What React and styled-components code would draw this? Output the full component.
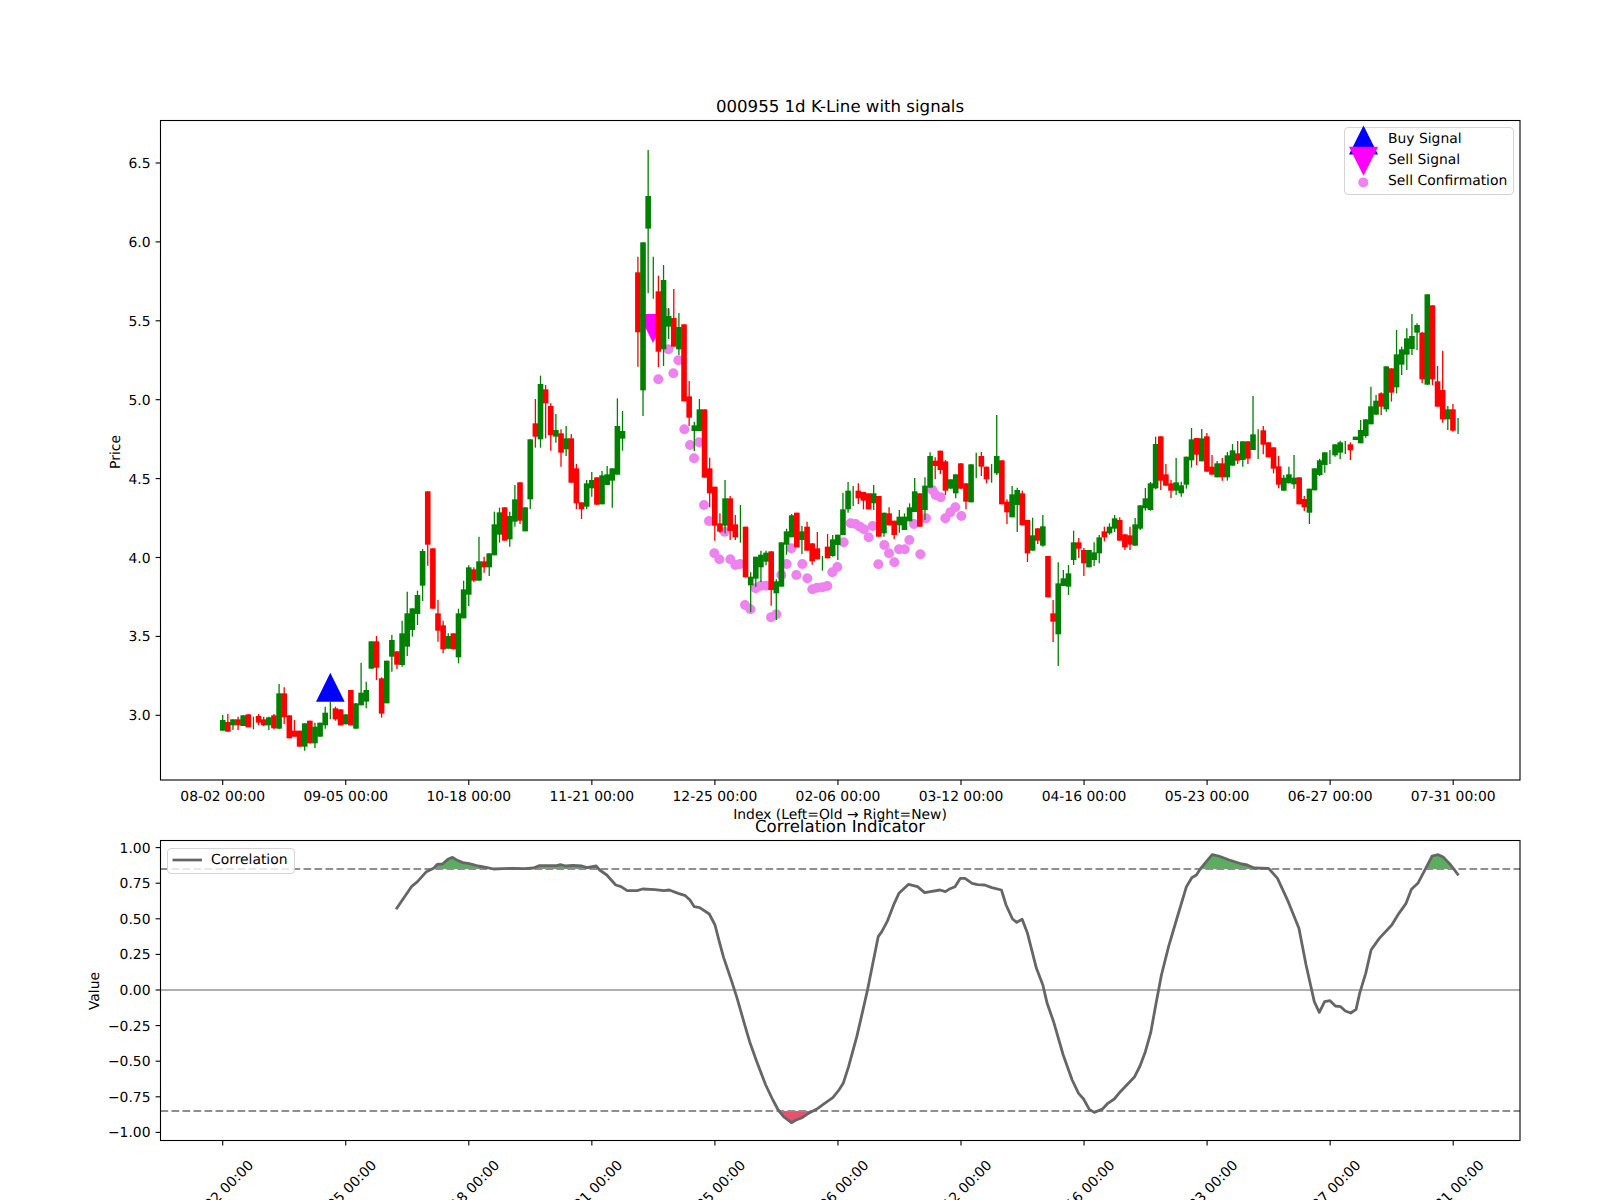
import React from "react";
import styled, { createGlobalStyle } from "styled-components";

const G = "#008000";
const R = "#ff0000";
const FONT = `"DejaVu Sans", "Liberation Sans", sans-serif`;

const X0 = 222.7;
const STEP = 5.126;
const xOf = (i) => X0 + STEP * i;

/* Each row: colour, wick top, body top, body bottom, wick bottom, as read in a 3x crop whose top is y0 */
const seg = (start, y0, rows) =>
  rows.map(([c, wt, bt, bb, wb], k) => ({
    i: start + k,
    c,
    wt: y0 + wt / 3,
    bt: y0 + bt / 3,
    bb: y0 + bb / 3,
    wb: y0 + wb / 3,
  }));

const CANDLES = [
  ...seg(0, 600, [
    [G, 345, 360, 392, 392], [R, 342, 366, 395, 395], [G, 358, 358, 376, 390], [R, 350, 358, 376, 390],
    [G, 345, 346, 378, 378], [R, 343, 343, 382, 382], [G, 350, 368, 368, 388], [R, 342, 348, 368, 375],
    [R, 350, 358, 376, 378], [G, 350, 352, 376, 390], [R, 342, 346, 385, 388], [G, 252, 280, 386, 388],
    [R, 262, 280, 352, 372], [R, 346, 346, 415, 415], [R, 360, 392, 410, 410], [R, 392, 392, 440, 440],
    [G, 370, 370, 440, 452], [R, 362, 362, 430, 430], [G, 368, 380, 430, 444], [G, 368, 368, 410, 410],
    [G, 320, 338, 376, 386], [G, 305, 305, 305, 358], [R, 320, 325, 358, 362], [R, 328, 328, 376, 376],
    [G, 343, 343, 373, 373], [R, 270, 270, 376, 376], [G, 310, 310, 386, 386], [G, 188, 278, 316, 316],
    [G, 245, 270, 305, 325], [G, 124, 124, 206, 206], [R, 108, 124, 203, 240], [R, 232, 235, 341, 353],
    [G, 182, 182, 310, 310], [G, 105, 120, 170, 215], [R, 154, 154, 194, 207],
  ]),
  ...seg(35, 370, [
    [G, 752, 790, 885, 890], [G, 665, 730, 830, 858], [G, 715, 715, 780, 800], [G, 662, 675, 732, 765],
    [G, 537, 543, 647, 693], [R, 364, 364, 524, 587], [R, 535, 535, 716, 716], [R, 690, 730, 782, 815],
    [R, 752, 766, 838, 850], [G, 790, 798, 836, 836], [R, 790, 790, 838, 838], [G, 716, 730, 862, 880],
    [G, 632, 658, 745, 745], [G, 586, 592, 674, 708], [R, 592, 598, 632, 636], [G, 500, 574, 632, 632],
    [R, 560, 574, 592, 608], [G, 550, 550, 592, 618], [G, 425, 463, 556, 556], [G, 413, 427, 494, 518],
    [R, 412, 412, 512, 512], [G, 425, 438, 508, 530], [G, 345, 388, 455, 470], [R, 337, 337, 452, 462],
    [G, 412, 412, 484, 484], [G, 208, 208, 388, 417], [R, 87, 160, 200, 233], [G, 17, 42, 208, 233],
    [R, 45, 58, 100, 205], [R, 100, 108, 195, 242], [G, 132, 180, 200, 218], [R, 178, 190, 248, 290],
    [G, 168, 205, 238, 258], [R, 192, 205, 338, 338], [R, 282, 295, 400, 417], [R, 397, 397, 418, 447],
    [G, 330, 340, 410, 417], [G, 306, 330, 355, 380], [R, 322, 322, 404, 404], [G, 303, 316, 403, 403],
    [G, 288, 313, 345, 345], [G, 295, 295, 332, 413], [G, 85, 168, 314, 314], [G, 123, 183, 206, 242],
  ]),
  ...seg(81, 130, [
    [R, 380, 427, 607, 710], [G, 337, 337, 781, 858], [G, 60, 198, 296, 490], [G, 380, 380, 380, 506],
    [R, 437, 484, 665, 711], [G, 405, 450, 658, 708], [G, 534, 558, 590, 627], [R, 477, 564, 650, 650],
    [G, 549, 591, 658, 675], [R, 583, 583, 814, 814],
  ]),
  ...seg(91, 320, [
    [R, 183, 229, 293, 318], [G, 305, 316, 333, 393], [G, 237, 268, 333, 333], [R, 268, 268, 473, 473],
  ]),
  ...seg(95, 420, [
    [R, 113, 145, 220, 262], [R, 200, 200, 317, 362], [R, 280, 310, 335, 338], [G, 180, 235, 317, 340],
    [R, 228, 235, 333, 360], [R, 285, 313, 352, 360], [G, 255, 255, 255, 368], [R, 320, 320, 472, 472],
    [G, 457, 470, 496, 576], [G, 410, 410, 476, 500], [G, 392, 404, 442, 486], [G, 392, 398, 425, 436],
    [R, 394, 394, 510, 557], [G, 478, 484, 520, 600], [G, 367, 367, 500, 500], [G, 326, 334, 374, 404],
    [G, 282, 286, 352, 352], [R, 278, 278, 382, 382], [G, 318, 334, 360, 402], [R, 305, 320, 392, 392],
    [R, 370, 370, 424, 434], [R, 336, 385, 418, 418], [G, 408, 408, 408, 452], [R, 342, 380, 415, 415],
    [G, 345, 358, 408, 410], [G, 344, 344, 375, 420], [G, 218, 268, 345, 345], [G, 186, 212, 268, 278],
    [G, 198, 198, 198, 258], [R, 190, 212, 235, 252], [R, 216, 216, 242, 268], [R, 220, 220, 268, 268],
    [G, 195, 220, 250, 270], [R, 228, 228, 350, 350], [G, 278, 278, 340, 350], [R, 262, 280, 316, 316],
    [R, 302, 302, 345, 357], [G, 270, 290, 316, 338], [G, 280, 290, 330, 330], [G, 250, 262, 304, 304],
    [G, 174, 214, 276, 276], [R, 220, 220, 320, 320], [G, 172, 197, 270, 300], [G, 97, 108, 203, 203],
    [R, 112, 122, 138, 178], [R, 92, 92, 150, 162], [R, 120, 124, 212, 225], [G, 178, 178, 206, 206],
    [G, 163, 163, 220, 235], [R, 130, 130, 206, 206], [R, 190, 190, 245, 268], [G, 133, 133, 247, 247],
    [G, 98, 98, 98, 175], [R, 96, 108, 140, 168], [R, 140, 140, 178, 190], [G, 132, 132, 132, 188],
    [G, -15, 108, 160, 165],
  ]),
  ...seg(152, 400, [
    [R, 181, 181, 313, 313], [R, 298, 305, 337, 372], [G, 258, 283, 352, 352], [G, 263, 270, 315, 396],
    [R, 272, 280, 376, 376], [R, 360, 360, 460, 486], [G, 353, 406, 452, 452], [R, 385, 385, 422, 432],
    [G, 345, 379, 437, 440], [R, 468, 468, 592, 592], [R, 600, 640, 665, 726], [G, 487, 550, 703, 798],
    [G, 510, 535, 558, 558], [G, 495, 520, 560, 585], [G, 392, 427, 480, 495], [R, 414, 427, 446, 474],
    [R, 444, 450, 490, 528], [G, 450, 450, 502, 502], [G, 427, 457, 480, 498], [G, 405, 412, 460, 490],
    [R, 380, 394, 412, 424], [G, 370, 380, 400, 404], [G, 345, 355, 386, 396], [R, 352, 360, 422, 422],
    [R, 403, 403, 442, 450], [R, 380, 406, 434, 450], [G, 354, 373, 437, 437], [G, 316, 316, 386, 390],
    [G, 264, 295, 325, 332], [G, 246, 250, 330, 332], [G, 110, 132, 265, 268], [R, 109, 109, 242, 270],
    [R, 192, 223, 257, 257], [R, 240, 250, 272, 294], [G, 174, 247, 272, 285], [G, 245, 256, 280, 290],
    [G, 170, 170, 254, 266], [G, 84, 118, 181, 203], [R, 114, 114, 164, 195], [G, 87, 115, 184, 184],
    [R, 99, 109, 215, 215], [R, 165, 200, 224, 224], [G, 183, 190, 232, 232], [R, 174, 190, 232, 242],
    [G, 156, 166, 232, 242], [G, 132, 151, 197, 197], [R, 123, 160, 182, 192], [G, 124, 124, 180, 200],
    [R, 124, 124, 176, 192], [G, -12, 103, 150, 150], [G, 88, 88, 88, 177], [R, 78, 91, 134, 163],
    [R, 127, 127, 172, 172], [R, 142, 142, 206, 220], [R, 168, 199, 254, 265], [G, 225, 233, 272, 272],
    [G, 200, 223, 250, 250], [G, 165, 233, 253, 266], [R, 232, 232, 313, 313], [R, 288, 297, 322, 333],
    [G, 266, 266, 338, 372], [G, 205, 205, 271, 271], [G, 176, 181, 225, 228], [G, 157, 157, 195, 218],
    [G, 150, 150, 150, 192], [G, 133, 133, 166, 170], [G, 122, 127, 158, 178], [G, 123, 123, 123, 162],
    [R, 127, 133, 151, 180],
  ]),
  ...seg(221, 280, [
    [G, 470, 470, 480, 480], [G, 420, 450, 490, 490], [G, 418, 418, 468, 473], [G, 320, 379, 433, 433],
    [G, 345, 362, 404, 404], [R, 337, 340, 380, 405], [G, 259, 259, 388, 395], [R, 265, 265, 338, 365],
    [G, 150, 223, 322, 340], [G, 200, 208, 254, 285], [G, 145, 175, 224, 270], [G, 102, 168, 207, 225],
    [G, 130, 135, 158, 210], [R, 155, 158, 298, 310], [G, 43, 43, 314, 314], [R, 76, 76, 298, 315],
    [R, 258, 304, 380, 380], [R, 212, 330, 418, 428], [G, 378, 388, 418, 450], [R, 372, 388, 452, 455],
    [G, 414, 414, 414, 462],
  ]),
];

const crop = (x0, y0, pts, xScale = 1) => pts.map(([x, y]) => [x0 + (x * xScale) / 3, y0 + y / 3]);

const DOTS = [
  ...crop(690, 420, [
    [0,75],[27,67],[12,115],[42,255],[57,303],[104,335],[73,400],[88,418],[121,418],[136,435],[150,432],[165,555],
    [181,568],[197,505],[212,497],[228,497],[243,592],[259,583],[274,465],[290,432],[304,385],[319,465],[337,432],
    [352,475],[367,508],[381,503],[397,502],[412,498],[427,457],[442,441],[461,367],[482,310],[497,312],[510,320],
    [522,328],[536,352],[548,318],[565,433],[583,375],[597,400],[613,427],[627,388],[644,388],[658,360],[672,312],
    [691,403],[708,295],[727,210],[737,225],[752,232],[766,295],[781,277],[796,262],[814,288],
  ]),
  ...crop(600, 130, [[175,748],[220,730],[235,691],[205,658],[195,548]]),
  ...crop(620, 320, [[193,328]]),
];

const LINE_SCALE = 1680 / 1568;
const LINE = [
  ...crop(380, 840, [
    [45,208],[88,140],[105,125],[130,95],[150,85],[160,73],[175,72],[190,58],[203,52],[218,62],[232,68],[250,71],
    [275,78],[300,83],[318,87],[345,86],[375,85],[405,86],[430,84],[445,77],[475,77],[495,77],[505,74],[520,78],
    [540,76],[565,78],[580,83],[605,78],[615,90],[635,105],[660,135],[675,140],[692,152],[720,152],[735,147],[770,149],
    [795,152],[810,150],[835,160],[855,167],[868,180],[880,200],[895,203],[922,222],[938,255],[950,305],[962,352],
    [985,425],[1000,475],[1020,550],[1035,605],[1055,665],[1080,735],[1100,780],[1115,810],[1130,830],[1152,848],
    [1165,840],[1180,834],[1200,820],[1222,808],[1245,790],[1268,773],[1285,750],[1297,730],[1312,680],[1335,590],
    [1348,530],[1365,450],[1380,370],[1395,290],[1405,275],[1420,245],[1440,190],[1453,160],[1480,133],[1505,140],
    [1525,158],
  ], LINE_SCALE),
  ...crop(940, 840, [
    [0,150],[15,155],[25,148],[42,140],[57,115],[70,115],[90,130],[105,134],[125,135],[145,143],[172,150],[185,195],
    [203,237],[215,247],[230,238],[245,280],[270,385],[288,435],[300,490],[318,545],[345,645],[370,720],[388,760],
    [402,777],[418,808],[432,817],[455,807],[470,790],[488,777],[505,755],[545,710],[560,678],[575,635],[590,578],
    [605,490],[620,405],[640,320],[662,240],[690,140],[705,113],[718,105],[730,85],[762,44],[780,48],[810,60],[845,72],
    [860,75],[880,84],[920,85],[945,115],[975,185],[1005,265],[1025,375],[1048,485],[1062,517],[1077,485],[1092,482],
    [1107,498],[1122,500],[1135,513],[1150,519],[1165,508],[1175,460],[1192,400],[1207,330],[1230,295],[1265,255],
    [1285,220],[1305,190],[1320,148],[1338,130],[1360,85],[1378,48],[1395,44],[1410,52],[1430,75],[1452,106],
  ], LINE_SCALE),
];

const linePoints = LINE.map((p) => p.join(",")).join(" ");
const UP_Y = 869;
const DOWN_Y = 1111;
const ZERO_Y = 990;
const upFill = `${LINE[0][0]},${UP_Y} ${linePoints} ${LINE[LINE.length - 1][0]},${UP_Y}`;
const downFill = `${LINE[0][0]},${DOWN_Y} ${linePoints} ${LINE[LINE.length - 1][0]},${DOWN_Y}`;

const X_LABELS = [
  "08-02 00:00", "09-05 00:00", "10-18 00:00", "11-21 00:00", "12-25 00:00", "02-06 00:00",
  "03-12 00:00", "04-16 00:00", "05-23 00:00", "06-27 00:00", "07-31 00:00",
];
const tickX = (k) => X0 + 123.05 * k;
const PRICES = ["3.0", "3.5", "4.0", "4.5", "5.0", "5.5", "6.0", "6.5"];
const priceY = (p) => 715.3 - (p - 3) * 157.8;
const VALUES = ["1.00", "0.75", "0.50", "0.25", "0.00", "\u22120.25", "\u22120.50", "\u22120.75", "\u22121.00"];
const valueY = (k) => 847.6 + 35.6 * k;

const Global = createGlobalStyle`
  html, body { margin: 0; padding: 0; background: #fff; }
`;

const Figure = styled.div`
  width: 1600px;
  height: 1200px;
  overflow: hidden;
  background: #fff;
  font-family: ${FONT};
  color: #000;
  padding-top: 95px;
  box-sizing: border-box;
  text-rendering: geometricPrecision;
`;

const Title = styled.div`
  font-size: 16.6px;
  line-height: ${(p) => p.$lineHeight || 22}px;
  height: 22px;
  text-align: center;
  padding: 0 80px 0 160px;
  margin-top: ${(p) => p.$overlap || 0}px;
  position: relative;
  white-space: nowrap;
`;

const Plot = styled.div`
  position: relative;
  width: 1600px;
  height: ${(p) => p.$height}px;
`;

const Canvas = styled.svg`
  display: block;
  width: 1600px;
  height: 100%;
  overflow: visible;
`;

const Label = styled.text`
  font-family: ${FONT};
  font-size: 13.89px;
  fill: #000;
`;

const Legend = styled.div`
  position: absolute;
  left: ${(p) => p.$left}px;
  top: ${(p) => p.$top}px;
  width: ${(p) => p.$width}px;
  box-sizing: border-box;
  background: rgba(255, 255, 255, 0.8);
  border: 1.2px solid #d4d4d4;
  border-radius: 4px;
  padding: 1px 5px 2.5px 4px;
  display: flex;
  flex-direction: column;
`;

const LegendRow = styled.div`
  display: flex;
  align-items: center;
  height: 20.7px;
  font-size: 13.89px;
  white-space: nowrap;
`;

const Swatch = styled.svg`
  width: 39px;
  height: 20px;
  flex: none;
  overflow: visible;
`;

const Axes = ({ top, bottom }) => (
  <rect x={160.5} y={top} width={1359.5} height={bottom - top} fill="none" stroke="#000" strokeWidth={1.1} />
);

const Candle = ({ d }) => {
  const x = xOf(d.i);
  return (
    <g>
      <line x1={x} x2={x} y1={d.wt} y2={d.wb} stroke={d.c} strokeWidth={1.3} />
      {d.bb > d.bt && <rect x={x - 2.8} y={d.bt} width={5.6} height={d.bb - d.bt} fill={d.c} />}
    </g>
  );
};

const XTicks = ({ y }) =>
  X_LABELS.map((_, k) => (
    <line key={k} x1={tickX(k)} x2={tickX(k)} y1={y} y2={y + 4.9} stroke="#000" strokeWidth={1.1} />
  ));

export default function App() {
  return (
    <Figure>
      <Global />
      <Title $lineHeight={24}>000955 1d K-Line with signals</Title>
      <Plot $height={707}>
        <Canvas viewBox="0 117 1600 707">
          <polygon points="316,701.7 344.7,701.7 330.3,672.7" fill="#0000ff" />
          <polygon points="638.7,314 667.3,314 653,343" fill="#ff00ff" />
          {DOTS.map(([x, y], k) => (
            <circle key={k} cx={x} cy={y} r={5} fill="#ee82ee" />
          ))}
          {CANDLES.map((d) => (
            <Candle key={d.i} d={d} />
          ))}
          <Axes top={120.5} bottom={780} />
          <XTicks y={780} />
          {X_LABELS.map((t, k) => (
            <Label key={t} x={tickX(k)} y={801} textAnchor="middle">
              {t}
            </Label>
          ))}
          {PRICES.map((t) => (
            <g key={t}>
              <line x1={155.6} x2={160.5} y1={priceY(+t)} y2={priceY(+t)} stroke="#000" strokeWidth={1.1} />
              <Label x={150.5} y={priceY(+t) + 5} textAnchor="end">
                {t}
              </Label>
            </g>
          ))}
          <Label x={840} y={819} textAnchor="middle">
            Index (Left=Old → Right=New)
          </Label>
          <Label transform="translate(120 452) rotate(-90)" textAnchor="middle">
            Price
          </Label>
        </Canvas>
        <Legend $left={1344} $top={10} $width={169.5}>
          <LegendRow>
            <Swatch viewBox="0 0 39 20">
              <polygon points="0,25.5 29,25.5 14.5,-3.5" fill="#0000ff" />
            </Swatch>
            Buy Signal
          </LegendRow>
          <LegendRow>
            <Swatch viewBox="0 0 39 20">
              <polygon points="0,-3.2 29,-3.2 14.5,25.8" fill="#ff00ff" />
            </Swatch>
            Sell Signal
          </LegendRow>
          <LegendRow>
            <Swatch viewBox="0 0 39 20">
              <circle cx={14.3} cy={11.4} r={5} fill="#ee82ee" />
            </Swatch>
            Sell Confirmation
          </LegendRow>
        </Legend>
      </Plot>
      <Title $overlap={-8}>Correlation Indicator</Title>
      <Plot $height={362}>
        <Canvas viewBox="0 838 1600 362">
          <clipPath id="above">
            <rect x={160} y={840} width={1360} height={UP_Y - 840} />
          </clipPath>
          <clipPath id="below">
            <rect x={160} y={DOWN_Y} width={1360} height={1140 - DOWN_Y} />
          </clipPath>
          <polygon points={upFill} fill="#5bad5f" clipPath="url(#above)" />
          <polygon points={downFill} fill="#e8526f" clipPath="url(#below)" />
          <line x1={160.5} x2={1520} y1={UP_Y} y2={UP_Y} stroke="#8f8f8f" strokeWidth={2.1} strokeDasharray="7.7 3.3" />
          <line x1={160.5} x2={1520} y1={DOWN_Y} y2={DOWN_Y} stroke="#8f8f8f" strokeWidth={2.1} strokeDasharray="7.7 3.3" />
          <line x1={160.5} x2={1520} y1={ZERO_Y} y2={ZERO_Y} stroke="#b0b0b0" strokeWidth={2.1} />
          <polyline points={linePoints} fill="none" stroke="#666" strokeWidth={2.8} strokeLinejoin="round" />
          <Axes top={840.5} bottom={1140.5} />
          <XTicks y={1140.5} />
          {X_LABELS.map((t, k) => (
            <Label key={t} transform={`translate(${tickX(k) + 1.5} 1196) rotate(-45)`} textAnchor="middle">
              {t}
            </Label>
          ))}
          {VALUES.map((t, k) => (
            <g key={t}>
              <line x1={155.6} x2={160.5} y1={valueY(k)} y2={valueY(k)} stroke="#000" strokeWidth={1.1} />
              <Label x={150.5} y={valueY(k) + 5} textAnchor="end">
                {t}
              </Label>
            </g>
          ))}
          <Label transform="translate(99 991) rotate(-90)" textAnchor="middle">
            Value
          </Label>
        </Canvas>
        <Legend $left={167} $top={9.5} $width={127.5}>
          <LegendRow>
            <Swatch viewBox="0 0 39 20">
              <line x1={0.5} x2={30} y1={10} y2={10} stroke="#666" strokeWidth={2.7} />
            </Swatch>
            Correlation
          </LegendRow>
        </Legend>
      </Plot>
    </Figure>
  );
}
